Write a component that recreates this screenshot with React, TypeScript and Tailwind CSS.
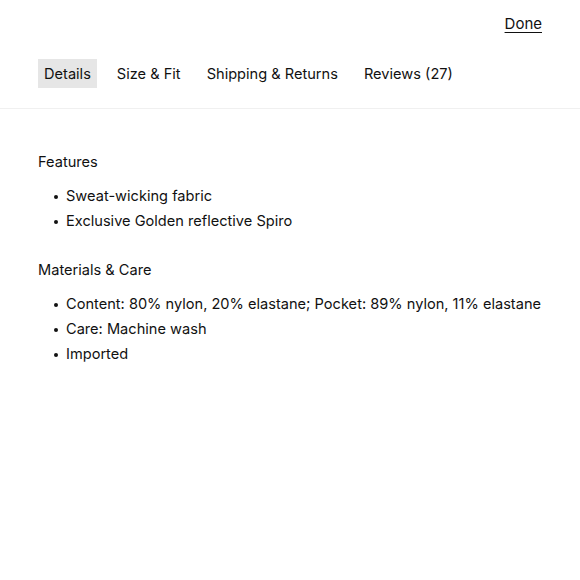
import React from 'react';

const tabs = ['Details', 'Size & Fit', 'Shipping & Returns', 'Reviews (27)'];

const sections = [
  { title: 'Features', items: ['Sweat-wicking fabric', 'Exclusive Golden reflective Spiro'] },
  {
    title: 'Materials & Care',
    items: [
      'Content: 80% nylon, 20% elastane; Pocket: 89% nylon, 11% elastane',
      'Care: Machine wash',
      'Imported',
    ],
  },
];

export default function App() {
  return (
    <div className="w-[580px] h-[580px] bg-white text-[#111] font-['Inter',sans-serif] text-[14.6px]">
      <header className="border-b border-[#f0f0f0]">
        <div className="flex justify-end pt-[13px] pr-[38px]">
          <button className="underline underline-offset-[3px] leading-[22px] text-[15px]">Done</button>
        </div>
        <nav className="flex gap-[14px] pl-[38px] pt-[24px] pb-[20px]">
          {tabs.map((tab, i) => (
            <button
              key={tab}
              className={`h-[29px] px-[6px] pt-[1px] leading-[29px] ${i === 0 ? 'bg-[#e6e6e6]' : ''}`}
            >
              {tab}
            </button>
          ))}
        </nav>
      </header>
      <main className="px-[38px] pt-[41px]">
        {sections.map((section) => (
          <section key={section.title} className="mb-[24px]">
            <h3 className="leading-[25px]">{section.title}</h3>
            <ul className="mt-[9px] pl-[16px]">
              {section.items.map((item) => (
                <li key={item} className="flex items-center gap-[8px] leading-[25px] whitespace-nowrap">
                  <span className="w-[4px] h-[4px] rounded-full bg-[#111] shrink-0" />
                  {item}
                </li>
              ))}
            </ul>
          </section>
        ))}
      </main>
    </div>
  );
}
